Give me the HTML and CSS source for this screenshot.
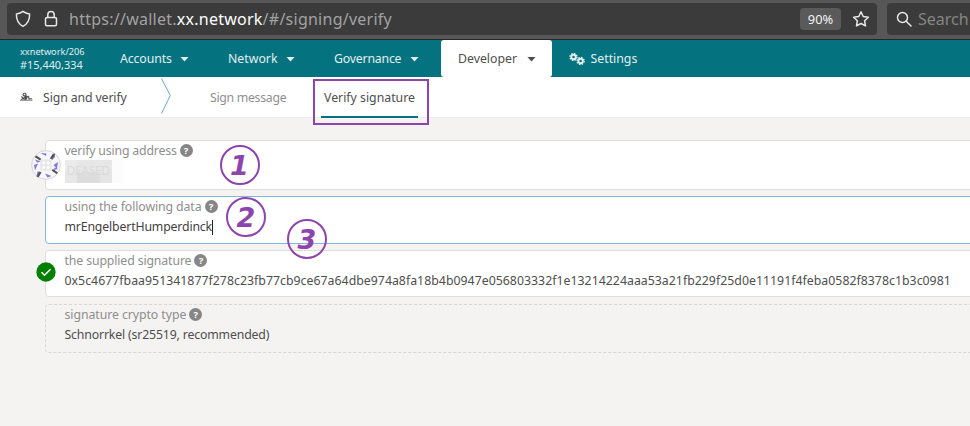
FILE: index.html
```html
<!DOCTYPE html>
<html lang="en">
<head>
<meta charset="utf-8">
<title>Sign and verify</title>
<link rel="stylesheet" href="styles.css">
</head>
<body>
<header class="browser">
  <div class="address">
    <svg class="shield" width="16" height="18" viewBox="0 0 16 18"><path d="M8 1.3C6.2 2.8 3.7 3.6 1.4 3.9c-.2 5.4 1.5 9.8 6.6 12.4 5.100-2.600 6.800-7 6.600-12.400C12.300 3.600 9.800 2.800 8 1.300Z"/></svg>
    <svg class="lock" width="14" height="18" viewBox="0 0 14 18"><rect x="1.500" y="7.500" width="11" height="8.200" rx="1.500"/><path d="M3.800 7.500V4.700a3.200 3.200 0 0 1 6.400 0v2.800"/></svg>
    <span class="url">https://wallet.<b>xx.network</b>/#/signing/verify</span>
    <span class="zoom">90%</span>
    <svg class="star" width="18" height="18" viewBox="0 0 18 18"><path d="m9 1.800 2.200 4.700 5.200.700-3.800 3.500.900 5.200L9 13.500l-4.500 2.400.900-5.200-3.800-3.500 5.200-.700Z"/></svg>
  </div>
  <div class="search">
    <svg width="16" height="16" viewBox="0 0 16 16"><circle cx="6.500" cy="6.500" r="5"/><path d="m10.200 10.200 4.800 4.800"/></svg>
    <span>Search</span>
  </div>
</header>
<nav class="menu">
  <div class="chain"><span class="chain-name">xxnetwork/206</span><span class="block">#15,440,334</span></div>
  <div class="item accounts"><span>Accounts</span><i class="caret"></i></div>
  <div class="item network"><span>Network</span><i class="caret"></i></div>
  <div class="item governance"><span>Governance</span><i class="caret"></i></div>
  <div class="item developer"><span>Developer</span><i class="caret"></i></div>
  <div class="item settings">
    <svg width="16" height="14" viewBox="0 0 16 14"><g fill="none" stroke="currentColor"><circle cx="4.500" cy="5" r="2.200" stroke-width="1.900"/><circle cx="4.500" cy="5" r="3.500" stroke-width="1.400" stroke-dasharray="1.500 1.250"/><circle cx="11.600" cy="9" r="2.200" stroke-width="1.900"/><circle cx="11.600" cy="9" r="3.500" stroke-width="1.400" stroke-dasharray="1.500 1.250"/></g></svg>
    <span>Settings</span>
  </div>
</nav>
<section class="tabs">
  <svg class="sign" width="13" height="10" viewBox="0 0 13 10"><path d="M0 8.300h12.500" stroke-width="1.300" stroke="#999"/><path d="M1 7.500C4 7 6 4 6 2.500S4 .7 3.200 2.200 4.500 4 6 3.800 4 7.500 5.500 7.500 6.500 4.800 8 4.300s.2 2.700 1.200 2.700 1.800-.6 2.800-.2M1.500 4.500l3 3.200"/></svg>
  <span class="page-name">Sign and verify</span>
  <svg class="divider" width="10" height="36" viewBox="0 0 10 36"><path d="M.5 .5 9.300 17.500.5 35.500"/></svg>
  <span class="tab message">Sign message</span>
  <span class="tab verify">Verify signature</span>
</section>
<main>
  <div class="field address-field">
    <label><span class="l1">verify using address</span><i class="help">?</i></label>
    <div class="redacted"><span>DEASED</span></div>
    <svg class="identicon" width="30" height="30" viewBox="0 0 30 30"><circle cx="15" cy="15" r="14.400" fill="#f8f7f8" stroke="#d6d5d6"/><g fill="#8278dc"><path d="M9.500 3 15.500 3.500 15 6zM19.500 7 24 3v4l-3 3zM3 15l4-1.500-3 7zM22.500 15l4.500-3-1 7zM14 23.500l6.500 2.500-4 1.500zM4 9.500l6 2-4 1zM23.500 17.500l3.500 1.500-4 1zM9.500 22l-4 4.500 1-5z"/></g><g fill="#565464"><path d="m3.500 7 2-1.500 5 3.500-1.500 1.500zM22 3.500l2 1-3 5-2-1zM8.500 21.500l2 1-3 5-2-1zM20.500 20.500l1.500-1.500 5 3.500-1.500 1.500z"/></g><rect x="9.500" y="9.500" width="11" height="11" fill="#e8e7e8"/><g fill="#fff"><circle cx="12.800" cy="12.800" r="1.600"/><circle cx="17.400" cy="12.800" r="1.600"/><circle cx="12.800" cy="17.400" r="1.600"/><circle cx="17.400" cy="17.400" r="1.600"/></g></svg>
  </div>
  <div class="field data-field">
    <label><span class="l2">using the following data</span><i class="help">?</i></label>
    <div class="value data"><span class="v2">mrEngelbertHumperdinck</span><i class="cursor"></i></div>
  </div>
  <div class="field signature-field">
    <label><span class="l3">the supplied signature</span><i class="help">?</i></label>
    <div class="value"><span class="v3">0x5c4677fbaa951341877f278c23fb77cb9ce67a64dbe974a8fa18b4b0947e056803332f1e13214224aaa53a21fb229f25d0e11191f4feba0582f8378c1b3c0981</span></div>
    <svg class="valid" width="20" height="20" viewBox="0 0 20 20"><circle cx="10" cy="10" r="9.700" fill="green"/><path d="m5.500 10.200 3 3 6-6" fill="none" stroke="#fff" stroke-width="1.500"/></svg>
  </div>
  <div class="field type-field">
    <label><span class="l4">signature crypto type</span><i class="help">?</i></label>
    <div class="value"><span class="v4">Schnorrkel (sr25519, recommended)</span></div>
  </div>
</main>
<div class="highlight"></div>
<div class="step one">1</div>
<div class="step two">2</div>
<div class="step three">3</div>
</body>
</html>
```
FILE: styles.css
```css
* { box-sizing: border-box; }
body { margin: 0; width: 970px; height: 426px; overflow: hidden; position: relative; background: #f4f3f2; color: #4e4e4e; font: 12.3px/16px "Noto Sans", sans-serif; }
span { white-space: nowrap; }
svg, i { flex: none; display: block; }
i { font-style: normal; }
.browser { display: flex; height: 40px; padding-top: 3px; gap: 10px; background: #575757; border-bottom: 1px solid #252525; }
.address, .search { height: 32px; display: flex; align-items: center; background: #3b3b3b; border-radius: 4px; flex: none; }
.address { width: 870px; margin-left: 7px; padding-left: 8px; }
.browser svg { fill: none; stroke: #e8e8e8; stroke-width: 1.5; stroke-linejoin: round; stroke-linecap: round; }
.lock { margin-left: 13px; }
.url { width: 731px; margin-left: 11px; color: #a2a2a2; font-size: 16px; line-height: 22px; letter-spacing: .25px; }
.url b { font-weight: 400; color: #fff; }
.zoom { width: 41px; height: 22px; border-radius: 4px; background: #5a5a5a; color: #f5f5f5; text-align: center; font-size: 12.8px; line-height: 22px; }
.star { margin-left: 11px; }
.search { width: 100px; padding-left: 9px; gap: 6px; color: #858585; font-size: 16px; }
.menu { height: 37px; display: flex; background: #04737f; color: #e1eef0; }
.chain { width: 104px; padding: 5px 0 0 20px; display: flex; flex-direction: column; }
.chain-name { font-size: 9.2px; line-height: 13px; }
.block { font-size: 10.9px; line-height: 13px; }
.item { display: flex; align-items: center; justify-content: space-between; padding: 0 16px; }
.accounts { width: 101px; }
.accounts span { letter-spacing: -.1px; }
.network { width: 99px; margin-left: 7px; }
.governance { width: 117px; margin-left: 7px; letter-spacing: -.2px; }
.developer { width: 111px; margin-left: 6px; padding-left: 17px; background: #fff; color: #4e4e4e; border-radius: 3px; }
.settings { justify-content: flex-start; gap: 5.5px; padding-left: 17px; }
.caret { width: 9px; height: 5px; margin-top: 1px; background: currentColor; clip-path: polygon(0 0, 100% 0, 50% 100%); }
.tabs { height: 41px; display: flex; background: #fff; border-bottom: 1px solid #ececec; line-height: 41px; }
.sign { margin: 15px 10px 0 20px; fill: none; stroke: #4e4e4e; stroke-width: 1.1; }
.page-name { width: 118px; letter-spacing: -.12px; }
.divider { margin-top: 1px; fill: none; stroke: #68acb3; stroke-width: 1; }
.tab { height: 41px; }
.message { width: 112px; padding-left: 39px; color: #8f8f8f; flex: none; letter-spacing: -.3px; }
.verify { width: 97px; margin-left: 38px; padding-left: 3px; border-bottom: 2px solid #04737f; }
main { padding: 22px 0 0 45px; display: flex; flex-direction: column; gap: 6px; }
.field { position: relative; width: 940px; padding: 2px 0 0 18.5px; background: #fff; border: 1px solid #dededf; border-radius: 4px; }
.address-field { height: 50px; }
.data-field { height: 48px; border-color: #85b7d9; }
.signature-field { height: 47px; }
.type-field { height: 49px; margin-top: 1px; background: none; border-style: dashed; border-color: #d8d7d6; }
label { display: flex; height: 16px; align-items: center; color: #8e8e8e; gap: 3px; }
.l1 { letter-spacing: -.18px; }
.l2 { letter-spacing: -.1px; }
.l3 { letter-spacing: -.13px; }
.l4 { letter-spacing: -.07px; }
.v2 { letter-spacing: -.16px; }
.v3 { letter-spacing: .026px; }
.v4 { letter-spacing: -.16px; }
.help { width: 13px; height: 13px; margin-bottom: 1px; border-radius: 50%; background: #868686; color: #fff; font: bold 9.5px/13px "Noto Sans", sans-serif; text-align: center; }
.value { display: flex; height: 20px; margin-top: 2px; align-items: center; }
.data { color: #3f3f3f; }
.cursor { width: 1px; height: 15px; background: #222; }
.redacted { width: 58px; height: 23px; margin-top: 1px; background: linear-gradient(90deg, #e7e7e7 0 12px, #dddddd 12px 35px, #e5e5e5 35px 47px, #fcfcfc 47px) 0 12px no-repeat, linear-gradient(90deg, #ebebeb 0 12px, #e7e7e7 12px 47px, #fcfcfc 47px); color: #dadada; padding-left: 2px; }
.redacted span { display: block; line-height: 22px; font-size: 12px; letter-spacing: -.3px; }
.identicon { position: absolute; left: -15px; top: 9px; }
.valid { position: absolute; left: -10.5px; top: 11px; }
.highlight { position: absolute; left: 313px; top: 79px; width: 116px; height: 46px; border: 2px solid #8e44ad; }
.step { position: absolute; width: 40px; height: 40px; border: 2px solid #8e44ad; border-radius: 50%; color: #8e44ad; font: italic bold 27px/38px "DejaVu Sans", sans-serif; text-align: center; }
.one { left: 219.5px; top: 145px; }
.two { left: 226px; top: 196.5px; }
.three { left: 287px; top: 219px; }
```
